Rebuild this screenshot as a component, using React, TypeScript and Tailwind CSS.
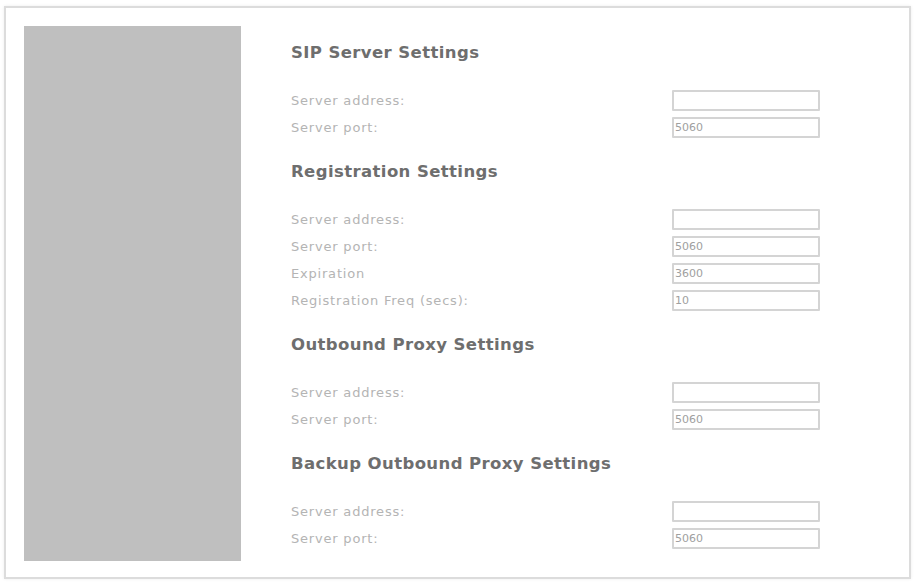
import type { ReactNode } from "react";

type Field = { label: string; value?: string };

const sections: { title: string; fields: Field[] }[] = [
  {
    title: "SIP Server Settings",
    fields: [{ label: "Server address:" }, { label: "Server port:", value: "5060" }],
  },
  {
    title: "Registration Settings",
    fields: [
      { label: "Server address:" },
      { label: "Server port:", value: "5060" },
      { label: "Expiration", value: "3600" },
      { label: "Registration Freq (secs):", value: "10" },
    ],
  },
  {
    title: "Outbound Proxy Settings",
    fields: [{ label: "Server address:" }, { label: "Server port:", value: "5060" }],
  },
  {
    title: "Backup Outbound Proxy Settings",
    fields: [{ label: "Server address:" }, { label: "Server port:", value: "5060" }],
  },
];

const Row = ({ label, value }: Field) => (
  <div className="flex h-[27px] items-center justify-between">
    <span className="text-[13px] tracking-[0.8px] text-[#b4b4b4]">{label}</span>
    <input
      readOnly
      defaultValue={value ?? ""}
      className="h-[21px] w-[148px] rounded-[1px] border-2 border-[#d4d4d4] bg-white px-[1px] text-[11px] text-[#a0a0a0] outline-none"
    />
  </div>
);

const Section = ({ title, children }: { title: string; children: ReactNode }) => (
  <div className="flex flex-col">
    <h2 className="h-[22px] text-[16.5px] font-bold leading-[22px] tracking-[0.4px] text-[#6e6e6e]">
      {title}
    </h2>
    <div className="mt-[23px] flex flex-col">{children}</div>
  </div>
);

export default function App() {
  return (
    <div
      className="h-[582px] w-[915px] bg-white pl-[4px] pt-[6px]"
      style={{ fontFamily: '"DejaVu Sans", Verdana, sans-serif' }}
    >
      <div className="flex h-[573px] w-[907px] gap-[50px] border-2 border-[#dcdcdc] p-[18px] shadow-[0_0_3px_rgba(0,0,0,0.08)]">
        <div className="h-[535px] w-[217px] shrink-0 bg-[#bfbfbf]" />
        <div className="flex w-[529px] flex-col gap-[20px] pt-[16px]">
          {sections.map((s) => (
            <Section key={s.title} title={s.title}>
              {s.fields.map((f, i) => (
                <Row key={i} label={f.label} value={f.value} />
              ))}
            </Section>
          ))}
        </div>
      </div>
    </div>
  );
}
